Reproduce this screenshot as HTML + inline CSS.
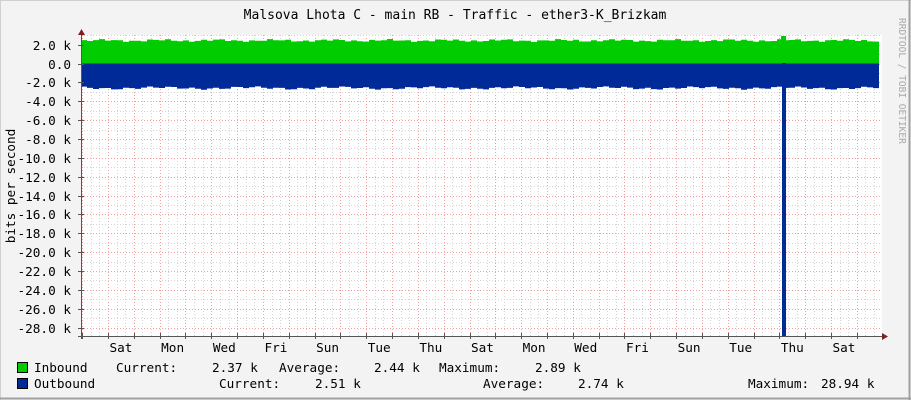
<!DOCTYPE html>
<html><head><meta charset="utf-8"><style>
html,body{margin:0;padding:0;background:#f3f3f3;}
svg{display:block;}
text{font-family:"DejaVu Sans Mono","Liberation Mono",monospace;font-size:12.7px;fill:#000;}
</style></head><body>
<svg id="g" width="911" height="400" xmlns="http://www.w3.org/2000/svg">
<defs><clipPath id="cp"><rect x="81" y="30" width="798" height="310"/></clipPath></defs>
<rect x="0" y="0" width="911" height="400" fill="#f3f3f3"/>
<line x1="0" y1="0.5" x2="911" y2="0.5" stroke="#d0d0d0"/>
<line x1="0.5" y1="0" x2="0.5" y2="400" stroke="#d0d0d0"/>
<line x1="909.5" y1="0" x2="909.5" y2="400" stroke="#a0a0a0" stroke-width="2"/>
<line x1="0" y1="398.5" x2="911" y2="398.5" stroke="#a0a0a0" stroke-width="2"/>
<rect x="81" y="35" width="801" height="301" fill="#ffffff"/>
<g id="grid"></g>
<g id="data" clip-path="url(#cp)"></g>
<g id="axes"></g>
<text x="455" y="19" text-anchor="middle" style="font-size:13px">Malsova Lhota C - main RB - Traffic - ether3-K_Brizkam</text>
<text transform="translate(15,186) rotate(-90)" text-anchor="middle">bits per second</text>
<text transform="translate(899,18) rotate(90)" style="font-size:9.5px;fill:#aaa">RRDTOOL / TOBI OETIKER</text>
<g id="labels"></g>
<rect x="17.5" y="362.5" width="10" height="10" fill="#00cc00" stroke="#000"/>
<rect x="17.5" y="378.5" width="10" height="10" fill="#002a97" stroke="#000"/>
<text x="34" y="372">Inbound</text>
<text x="116" y="372">Current:</text>
<text x="212" y="372">2.37 k</text>
<text x="279" y="372">Average:</text>
<text x="374" y="372">2.44 k</text>
<text x="439" y="372">Maximum:</text>
<text x="535" y="372">2.89 k</text>
<text x="34" y="388">Outbound</text>
<text x="219" y="388">Current:</text>
<text x="315" y="388">2.51 k</text>
<text x="483" y="388">Average:</text>
<text x="578" y="388">2.74 k</text>
<text x="748" y="388">Maximum:</text>
<text x="821" y="388">28.94 k</text>
</svg>
<script>
var NS="http://www.w3.org/2000/svg";
function el(p,t,a){var e=document.createElementNS(NS,t);for(var k in a)e.setAttribute(k,a[k]);document.getElementById(p).appendChild(e);return e;}
var d=25.82,x0=82.2;
for(var i=0;i*d/3+x0<882;i++){var x=Math.round(x0+i*d/3)+0.5;
 el("grid","line",{x1:x,y1:35,x2:x,y2:336,stroke:(i%3==0)?"#f0a0a0":"#d4d4d4","stroke-dasharray":"1,2"});}
var y0=63.5,s=18.86;
for(var k=-3;k<=29;k++){var y=Math.round(y0+k*s/2)+0.5;if(y<35||y>336)continue;
 el("grid","line",{x1:81,y1:y,x2:882,y2:y,stroke:(k%2==0)?"#f0a0a0":"#d4d4d4","stroke-dasharray":"1,2"});}
var gt=[],bt=[];
for(var x=81;x<879;x+=6){var r=Math.sin(x*0.37)*0.8+Math.sin(x*0.11)*0.7;
 gt.push(x+","+(40.5+r).toFixed(1));gt.push((x+6)+","+(40.5+r).toFixed(1));
 var r2=Math.sin(x*0.29)*0.9+Math.sin(x*0.07)*0.8;
 bt.push(x+","+(88+r2).toFixed(1));bt.push((x+6)+","+(88+r2).toFixed(1));}
el("data","path",{d:"M81,63.5 L"+gt.join(" L")+" L"+(x)+",63.5 Z",fill:"#00cc00"});
el("data","path",{d:"M81,63.5 L"+bt.join(" L")+" L"+(x)+",63.5 Z",fill:"#002a97"});
el("data","rect",{x:781,y:36,width:5,height:5,fill:"#00cc00"});
el("data","rect",{x:782,y:63,width:4,height:273,fill:"#002a97"});
el("axes","line",{x1:81.5,y1:31,x2:81.5,y2:339,stroke:"#555"});
el("axes","line",{x1:78,y1:336.5,x2:884,y2:336.5,stroke:"#555"});
el("axes","path",{d:"M78,35 L81.5,29 L85,35 Z",fill:"#802020"});
el("axes","path",{d:"M882,333 L888,336.5 L882,340 Z",fill:"#802020"});
for(var k=-1;k<=14;k++){var y=Math.round(y0+k*s)+0.5;
 el("axes","line",{x1:78,y1:y,x2:84,y2:y,stroke:"#555"});
 var v=-2*k,t=(v==0)?"0.0":(v.toFixed(1)+" k");
 var tx=el("labels","text",{x:71,y:y+4.5,"text-anchor":"end"});tx.textContent=t;}
for(var i=0;i*d+x0<882;i++){var x=Math.round(x0+i*d)+0.5;
 el("axes","line",{x1:x,y1:333,x2:x,y2:339,stroke:"#555"});}
var days=["Sat","Mon","Wed","Fri","Sun","Tue","Thu","Sat","Mon","Wed","Fri","Sun","Tue","Thu","Sat"];
for(var i=0;i<days.length;i++){var cx=121+i*d*2;
 var tx=el("labels","text",{x:cx,y:352,"text-anchor":"middle"});tx.textContent=days[i];}
</script>
</body></html>
